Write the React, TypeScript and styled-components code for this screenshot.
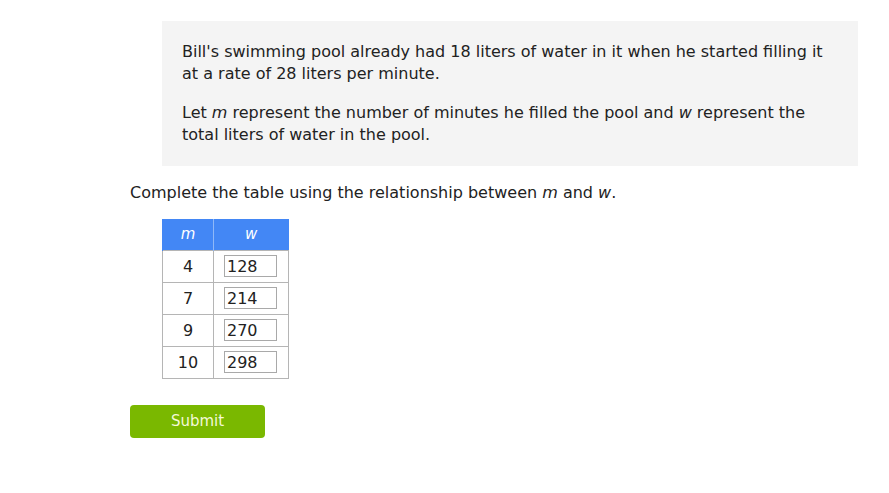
import React from "react";
import styled, { createGlobalStyle } from "styled-components";

const Global = createGlobalStyle`
  html, body { margin: 0; padding: 0; background: #ffffff; }
  body { font-family: "DejaVu Sans", Verdana, sans-serif; color: #222222; }
`;

const Page = styled.div`
  width: 889px;
  height: 493px;
  box-sizing: border-box;
  padding: 21px 0 0 130px;
  overflow: hidden;
`;

const ProblemBox = styled.div`
  margin-left: 32px;
  width: 696px;
  box-sizing: border-box;
  background: #f4f4f4;
  padding: 20px 20px 20px 20px;
`;

const Para = styled.p`
  margin: 0 0 17px 0;
  font-family: "DejaVu Sans", Verdana, sans-serif;
  font-size: 16px;
  line-height: 22px;
  color: #222;
  &:last-child { margin-bottom: 0; }
`;

const Var = styled.i`
  font-style: italic;
`;

const Prompt = styled.p`
  margin: 16px 0 0 0;
  font-size: 16px;
  line-height: 22px;
  color: #222;
`;

const Table = styled.table`
  margin: 15px 0 0 32px;
  border-collapse: collapse;
  font-size: 16px;
`;

const HeadCell = styled.th<{ $w: number }>`
  width: ${(p) => p.$w}px;
  height: 31px;
  box-sizing: border-box;
  padding: 0;
  background: #4387f5;
  color: #ffffff;
  font-weight: normal;
  font-style: italic;
  font-size: 15px;
  text-align: center;
  border-left: 1px solid #4387f5;
  & + & { border-left: 1px solid #8fb8f8; }
`;

const Cell = styled.td`
  height: 32px;
  box-sizing: border-box;
  padding: 0;
  border: 1px solid #b5b5b5;
  text-align: center;
  color: #222;
`;

const InputCell = styled(Cell)`
  padding: 0 10px;
  text-align: left;
`;

const NumInput = styled.input`
  display: block;
  width: 53px;
  height: 22px;
  box-sizing: border-box;
  margin: 0;
  padding: 0 2px;
  border: 1px solid #a9a9a9;
  font-family: "DejaVu Sans", Verdana, sans-serif;
  font-size: 16px;
  color: #222;
  background: #fff;
  outline: none;
`;

const SubmitButton = styled.button`
  display: block;
  margin-top: 26px;
  width: 135px;
  height: 33px;
  border: none;
  border-radius: 4px;
  background: #7ab800;
  color: #f4f9d8;
  font-family: "DejaVu Sans", Verdana, sans-serif;
  font-size: 15px;
  cursor: pointer;
`;

const rows = [
  { m: "4", w: "128" },
  { m: "7", w: "214" },
  { m: "9", w: "270" },
  { m: "10", w: "298" },
];

export default function App() {
  return (
    <Page>
      <Global />
      <ProblemBox>
        <Para>
          Bill's swimming pool already had 18 liters of water in it when he started filling it
          at a rate of 28 liters per minute.
        </Para>
        <Para>
          Let <Var>m</Var> represent the number of minutes he filled the pool and <Var>w</Var> represent the
          total liters of water in the pool.
        </Para>
      </ProblemBox>
      <Prompt>
        Complete the table using the relationship between <Var>m</Var> and <Var>w</Var>.
      </Prompt>
      <Table>
        <thead>
          <tr>
            <HeadCell $w={51}>m</HeadCell>
            <HeadCell $w={75}>w</HeadCell>
          </tr>
        </thead>
        <tbody>
          {rows.map((r) => (
            <tr key={r.m}>
              <Cell>{r.m}</Cell>
              <InputCell>
                <NumInput defaultValue={r.w} />
              </InputCell>
            </tr>
          ))}
        </tbody>
      </Table>
      <SubmitButton>Submit</SubmitButton>
    </Page>
  );
}
